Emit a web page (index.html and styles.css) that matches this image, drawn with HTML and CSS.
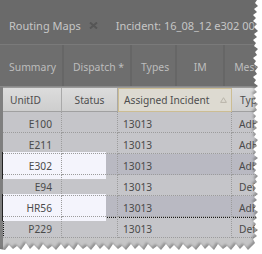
FILE: index.html
```html
<!DOCTYPE html>
<html>
<head>
<meta charset="utf-8">
<link rel="stylesheet" href="styles.css">
</head>
<body>
<div class="shot">
  <div class="doctabs">
    <div class="doctab">Routing Maps
      <svg class="close" width="9" height="7" viewBox="0 0 9 7"><path d="M1 0.5 L8 6.5 M8 0.5 L1 6.5" stroke="#565656" stroke-width="2"/></svg>
    </div>
    <div class="doctab incident">Incident: 16_08_12 e302 0002</div>
  </div>
  <div class="tabs">
    <div class="tab">Summary</div>
    <div class="tab">Dispatch *</div>
    <div class="tab">Types</div>
    <div class="tab narrow">IM</div>
    <div class="tab">Messages</div>
  </div>
  <div class="grid">
    <div class="row head">
      <div class="cell">UnitID</div>
      <div class="cell center">Status</div>
      <div class="cell sorted">Assigned Incident
        <svg class="sort" width="7" height="6" viewBox="0 0 7 6"><path d="M3.5 0.7 L6.4 5.4 L0.6 5.4 Z" fill="none" stroke="#b9b5aa" stroke-width="1"/></svg>
      </div>
      <div class="cell">Type</div>
    </div>
    <div class="row">
      <div class="cell right">E100</div><div class="cell"></div><div class="cell">13013</div><div class="cell">AdHoc</div>
    </div>
    <div class="row">
      <div class="cell right">E211</div><div class="cell"></div><div class="cell">13013</div><div class="cell">AdHoc</div>
    </div>
    <div class="row sel">
      <span class="hl"></span>
      <div class="cell right">E302</div><div class="cell"></div><div class="cell">13013</div><div class="cell">AdHoc</div>
    </div>
    <div class="row">
      <div class="cell right">E94</div><div class="cell"></div><div class="cell">13013</div><div class="cell">Default</div>
    </div>
    <div class="row sel">
      <span class="hl"></span>
      <div class="cell right">HR56</div><div class="cell"></div><div class="cell">13013</div><div class="cell">AdHoc</div>
    </div>
    <div class="row focus">
      <div class="cell right">P229</div><div class="cell"></div><div class="cell">13013</div><div class="cell">Default</div>
    </div>
  </div>
  <svg class="torn" width="262" height="254" viewBox="0 0 262 254">
    <defs>
      <filter id="blur" x="-10%" y="-10%" width="120%" height="120%"><feGaussianBlur stdDeviation="1"/></filter>
    </defs>
    <polygon class="shadow" filter="url(#blur)" transform="translate(-1.5,-2)" points="262,0 257,0 255,3 258,6 254,9 257,12 253,15 256,18 253,21 257,24 254,27 258,31 254,34 257,37 253,40 256,43 254,46 258,49 255,52 257,55 253,58 256,61 254,64 258,67 255,71 257,74 253,77 256,80 254,83 258,86 254,89 257,92 253,95 256,98 254,101 258,104 255,107 257,110 253,113 256,116 254,119 258,122 254,125 257,128 253,131 256,134 254,137 258,140 255,143 257,146 253,149 256,152 254,155 258,158 254,161 257,164 253,167 256,170 254,173 258,176 255,179 257,182 253,185 256,188 254,191 258,194 254,197 257,200 253,203 256,206 254,209 258,212 255,215 257,218 253,221 256,224 254,227 258,230 254,233 257,236 253,239 255,243 252,246 248,250 244,245 240,249 236,244 231,250 227,246 223,249 218,244 214,250 209,245 205,249 201,244 196,250 192,246 188,249 183,244 179,250 174,245 170,249 166,244 161,250 157,246 153,249 148,244 144,250 139,245 135,249 131,244 126,250 122,246 118,249 113,244 109,250 104,245 100,249 96,244 91,250 87,246 83,249 78,244 74,250 69,245 65,249 61,244 56,250 52,246 48,249 43,244 39,250 34,245 30,249 26,243 21,250 17,246 13,249 9,245 5,250 0,249 0,254 262,254"/>
    <polygon class="paper" points="262,0 257,0 255,3 258,6 254,9 257,12 253,15 256,18 253,21 257,24 254,27 258,31 254,34 257,37 253,40 256,43 254,46 258,49 255,52 257,55 253,58 256,61 254,64 258,67 255,71 257,74 253,77 256,80 254,83 258,86 254,89 257,92 253,95 256,98 254,101 258,104 255,107 257,110 253,113 256,116 254,119 258,122 254,125 257,128 253,131 256,134 254,137 258,140 255,143 257,146 253,149 256,152 254,155 258,158 254,161 257,164 253,167 256,170 254,173 258,176 255,179 257,182 253,185 256,188 254,191 258,194 254,197 257,200 253,203 256,206 254,209 258,212 255,215 257,218 253,221 256,224 254,227 258,230 254,233 257,236 253,239 255,243 252,246 248,250 244,245 240,249 236,244 231,250 227,246 223,249 218,244 214,250 209,245 205,249 201,244 196,250 192,246 188,249 183,244 179,250 174,245 170,249 166,244 161,250 157,246 153,249 148,244 144,250 139,245 135,249 131,244 126,250 122,246 118,249 113,244 109,250 104,245 100,249 96,244 91,250 87,246 83,249 78,244 74,250 69,245 65,249 61,244 56,250 52,246 48,249 43,244 39,250 34,245 30,249 26,243 21,250 17,246 13,249 9,245 5,250 0,249 0,254 262,254"/>
  </svg>
</div>
</body>
</html>
```

FILE: styles.css
```css
* { box-sizing: border-box; }
html, body {
  margin: 0;
  padding: 0;
  background: #ffffff;
}
body {
  width: 262px;
  height: 254px;
  overflow: hidden;
  font-family: "Noto Sans", "Open Sans", sans-serif;
}
.shot {
  position: relative;
  width: 262px;
  height: 254px;
  overflow: hidden;
  display: flex;
  flex-direction: column;
  background: #c5c5c6;
}
.doctabs {
  height: 44px;
  flex: none;
  background: #6a6a6a;
  display: flex;
  white-space: nowrap;
  overflow: hidden;
}
.doctab {
  padding: 19px 0 0 9px;
  font-size: 11px;
  line-height: 14px;
  color: #c6c6c6;
  display: flex;
  align-items: flex-start;
}
.doctab .close {
  margin: 3px 0 0 8px;
}
.doctab.incident {
  padding-left: 18px;
}
.tabs {
  height: 43px;
  flex: none;
  background: #6e6e6e;
  border-top: 1px solid #7a7a7a;
  border-bottom: 1px solid #8a8a8a;
  display: flex;
  white-space: nowrap;
  overflow: hidden;
}
.tab {
  padding: 15px 6px 0 9px;
  font-size: 10.4px;
  line-height: 14px;
  color: #bdbdbd;
  border-right: 2px solid #666666;
  text-align: center;
}
.tab.narrow {
  min-width: 48px;
  padding-left: 6px;
}
.grid {
  flex: 1;
  border-left: 3px solid #7f7f7f;
  font-size: 10.2px;
  line-height: 14px;
  color: #4a4a4a;
}
.row {
  position: relative;
  display: grid;
  grid-template-columns: 59px 56px 114px 60px;
  height: 21px;
  background: #c5c5c9;
  white-space: nowrap;
}
.row .cell {
  position: relative;
  z-index: 2;
  padding: 5px 5px 0 5px;
  border-right: 1px dotted #9c9c9c;
  border-bottom: 1px dotted #9c9c9c;
  overflow: hidden;
}
.row .cell.right {
  text-align: right;
  padding-right: 9px;
}
.row .cell.center {
  text-align: center;
}
.row.head {
  height: 25px;
  background: linear-gradient(#dcdcdc, #cdcdcd);
  border-top: 1px solid #9a9a9a;
  color: #4e4e4e;
}
.row.head .cell {
  padding-top: 5px;
  border-right: 1px solid #a9a9a9;
  border-bottom: 1px solid #a0a0a0;
}
.row.head .cell:first-child {
  padding-left: 7px;
}
.row.head .cell:last-child {
  padding-left: 8px;
}
.row .cell:last-child {
  padding-left: 7px;
}
.row.head .cell.sorted {
  background: #dddad1;
  border: 1px solid #ccbd93;
  display: flex;
  justify-content: space-between;
  padding-top: 4px;
  padding-right: 4px;
}
.sort {
  margin-top: 4px;
}
.row.sel {
  background: #b9b9c2;
}
.row.sel .cell:first-child {
  color: #1e1e28;
}
.hl {
  position: absolute;
  z-index: 1;
  left: -1px;
  top: -2px;
  bottom: -4px;
  width: 104px;
  background: #f4f4fc;
  border-left: 1px solid #222222;
}
.row.focus {
  outline: 1px dotted #1a1a1a;
  outline-offset: -1px;
}
.torn {
  position: absolute;
  left: 0;
  top: 0;
  z-index: 5;
  pointer-events: none;
}
.torn .shadow {
  fill: #6f6f6f;
  opacity: 0.6;
}
.torn .paper {
  fill: #ffffff;
}
```
